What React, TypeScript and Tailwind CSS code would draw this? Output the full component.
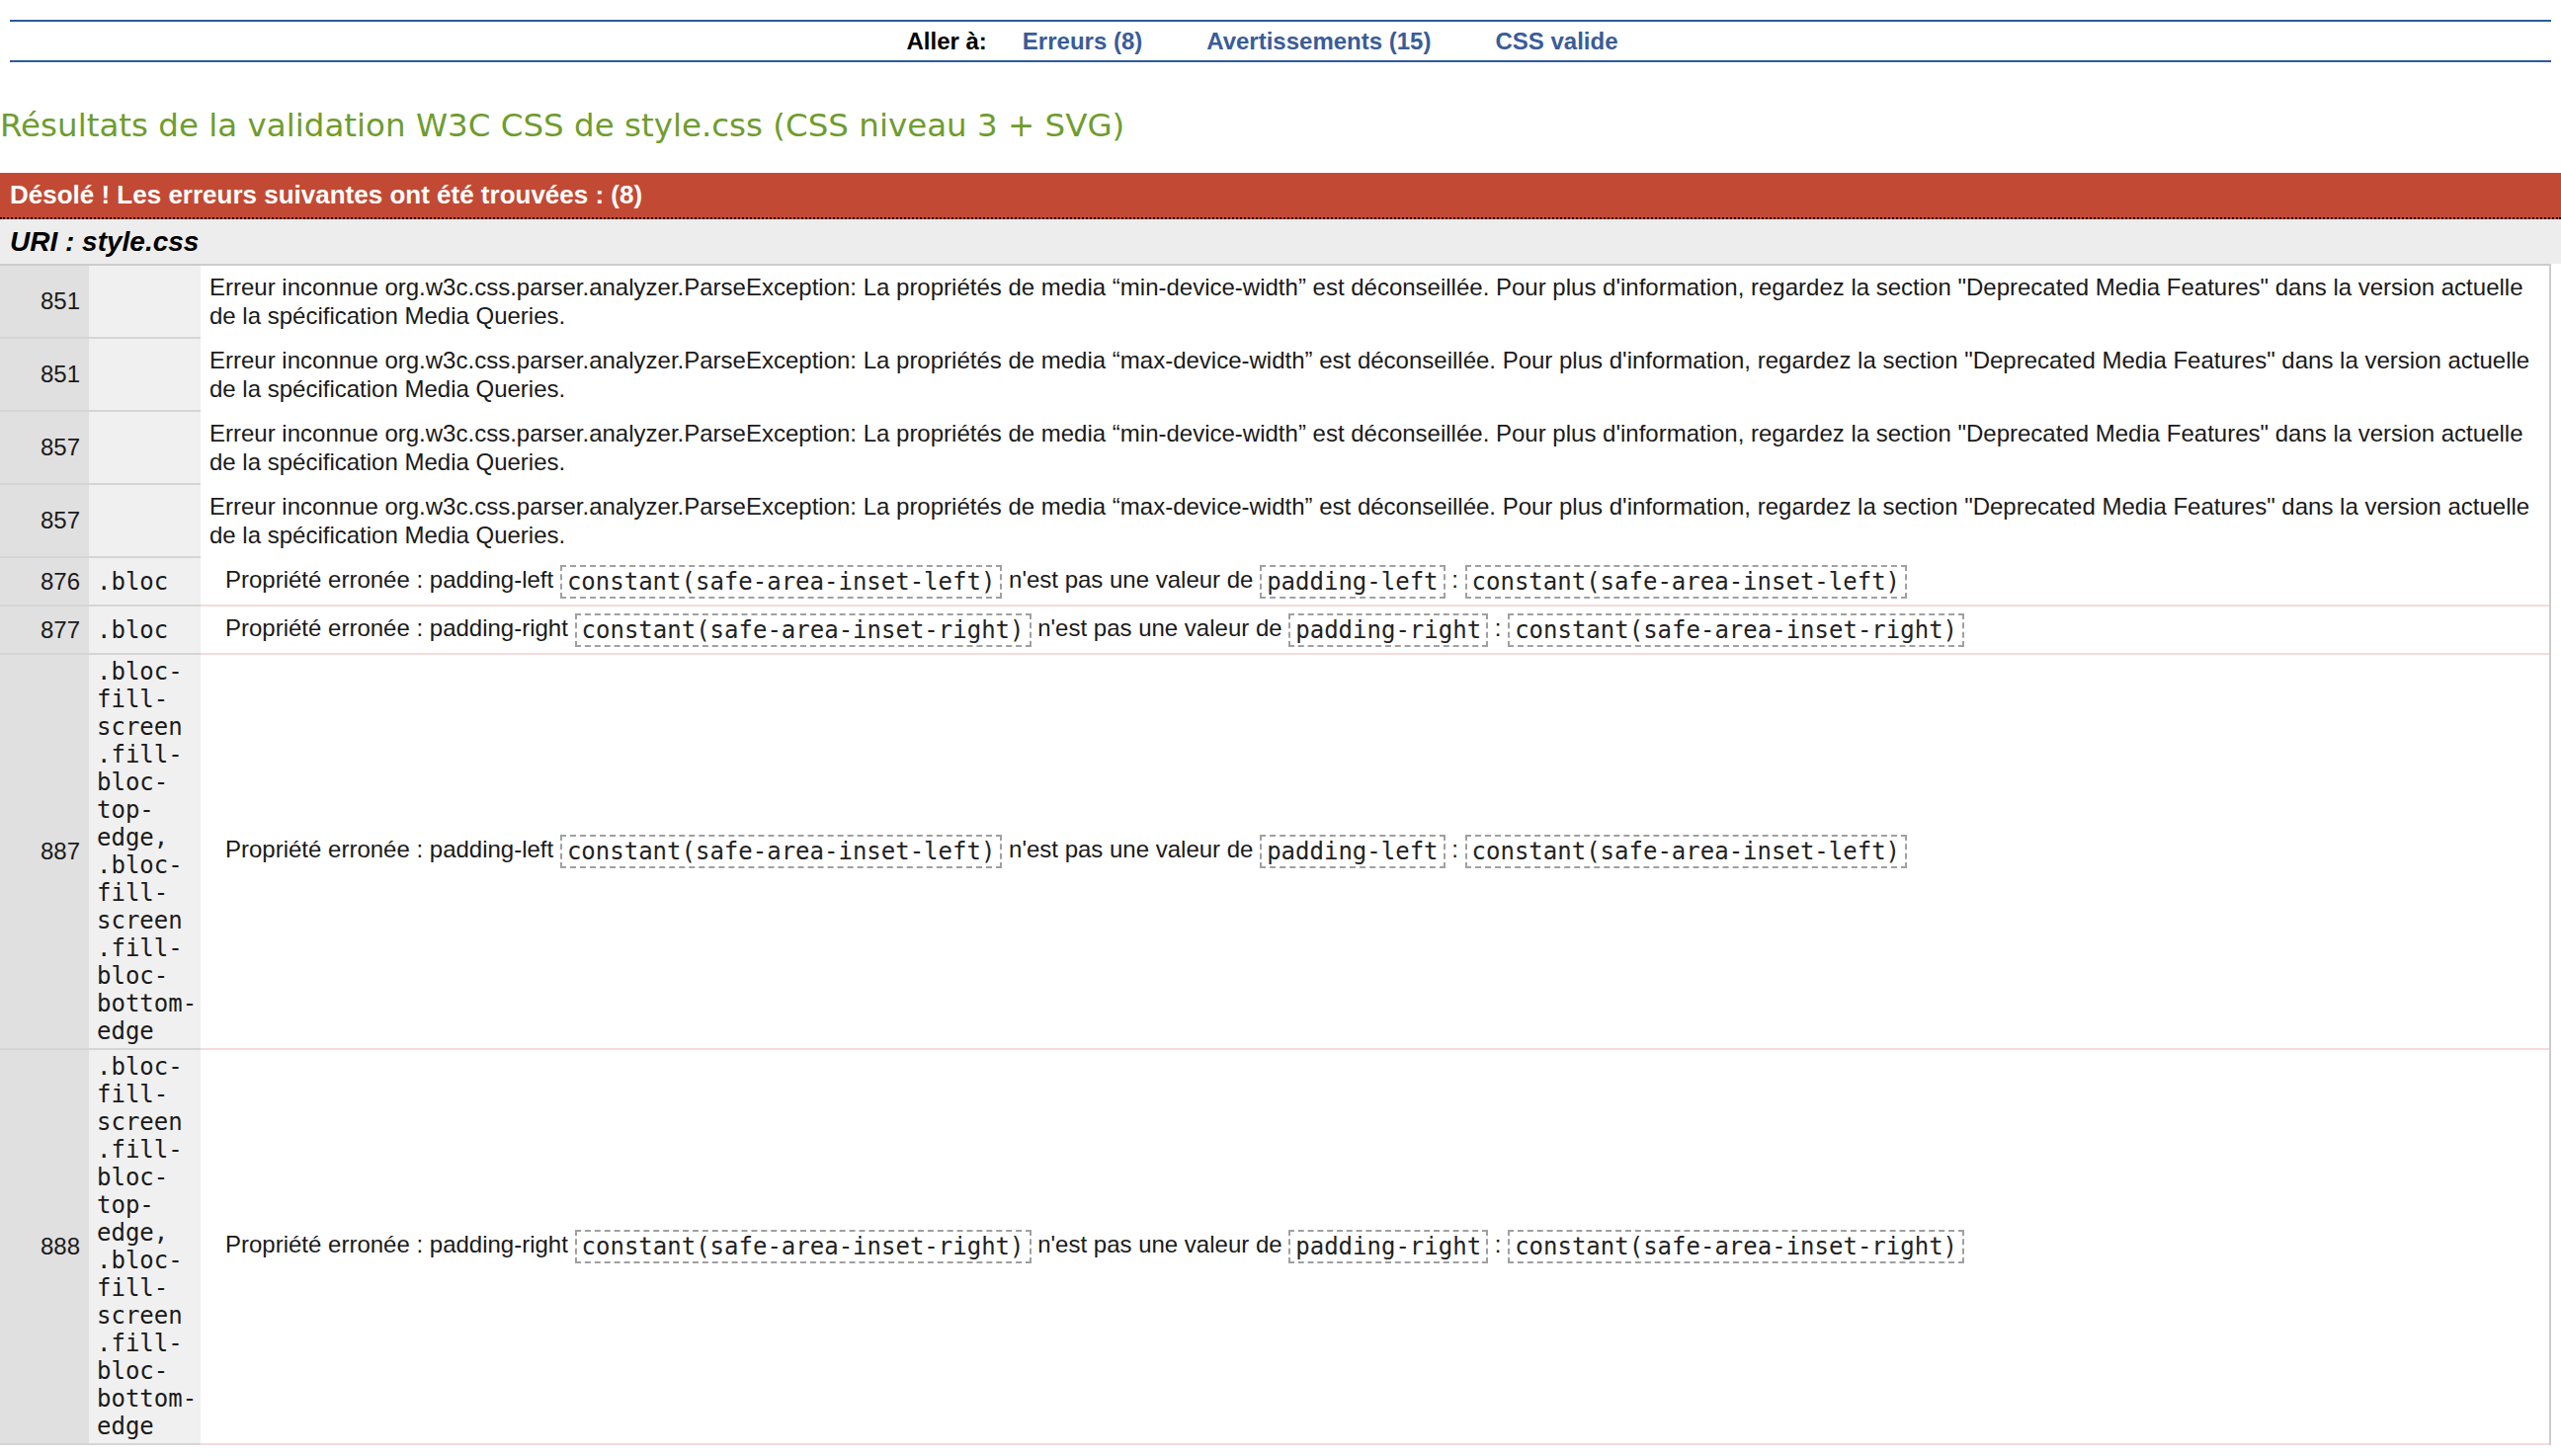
import React from 'react'

const MONO = "font-['DejaVu_Sans_Mono','Liberation_Mono',monospace]"

type Row =
  | { line: string; kind: 'media'; feature: string }
  | { line: string; kind: 'prop'; selector: string; prop: string; value: string }

const ROWS: Row[] = [
  { line: '851', kind: 'media', feature: 'min-device-width' },
  { line: '851', kind: 'media', feature: 'max-device-width' },
  { line: '857', kind: 'media', feature: 'min-device-width' },
  { line: '857', kind: 'media', feature: 'max-device-width' },
  { line: '876', kind: 'prop', selector: '.bloc', prop: 'padding-left', value: 'constant(safe-area-inset-left)' },
  { line: '877', kind: 'prop', selector: '.bloc', prop: 'padding-right', value: 'constant(safe-area-inset-right)' },
  {
    line: '887', kind: 'prop',
    selector: '.bloc-fill-screen .fill-bloc-top-edge, .bloc-fill-screen .fill-bloc-bottom-edge',
    prop: 'padding-left', value: 'constant(safe-area-inset-left)',
  },
  {
    line: '888', kind: 'prop',
    selector: '.bloc-fill-screen .fill-bloc-top-edge, .bloc-fill-screen .fill-bloc-bottom-edge',
    prop: 'padding-right', value: 'constant(safe-area-inset-right)',
  },
]

function Code({ children }: { children: React.ReactNode }) {
  return (
    <span className={`inline-block align-middle border-2 border-dashed border-[#a0a0a0] px-[5px] py-[1px] leading-[28px] text-[#222] ${MONO}`}>
      {children}
    </span>
  )
}

function ErrorRow({ row }: { row: Row }) {
  const prop = row.kind === 'prop'
  return (
    <>
      <div className="flex items-center justify-end pr-[9px] bg-[#e0e0e0] border-b-2 border-[#d5d5d5]">
        {row.line}
      </div>
      <div className={`flex items-center pl-[8px] pr-[2px] py-[3px] bg-[#f0f0f0] border-b-2 border-[#d5d5d5] leading-[28px] ${MONO}`}>
        {prop ? <span>{row.selector}</span> : null}
      </div>
      {prop ? (
        <div className="flex items-center min-h-[49px] pl-[25px] pr-[9px] border-b-2 border-[#f7dada]">
          <p className="leading-[28px]">
            Propriété erronée : {row.prop} <Code>{row.value}</Code> n'est pas une valeur de <Code>{row.prop}</Code> : <Code>{row.value}</Code>
          </p>
        </div>
      ) : (
        <div className="flex items-center pl-[9px] pr-[9px] py-[7px] border-b-2 border-white">
          <p className="leading-[29px]">
            Erreur inconnue org.w3c.css.parser.analyzer.ParseException: La propriétés de media “{row.feature}” est déconseillée. Pour plus d'information, regardez la section "Deprecated Media Features" dans la version actuelle
            <br />
            de la spécification Media Queries.
          </p>
        </div>
      )}
    </>
  )
}

export default function App() {
  return (
    <div className="min-h-screen bg-white text-[24px] text-[#1a1a1a] font-['Liberation_Sans',Arial,sans-serif]">
      {/* Aller à */}
      <nav className="mx-[10px] mt-[20px] h-[43px] border-y-2 border-[#2b5d9b] flex items-center justify-center font-bold">
        <div className="flex items-center pr-[37px]">
          <span className="text-black">Aller à:</span>
          <a href="#errors" className="ml-[36px] text-[#3a5c98]">Erreurs (8)</a>
          <a href="#warnings" className="ml-[65px] text-[#3a5c98]">Avertissements (15)</a>
          <a href="#css" className="ml-[65px] text-[#3a5c98]">CSS valide</a>
        </div>
      </nav>

      <h2 className="mt-[45px] text-[32.5px] leading-[38px] text-[#6f9c2d] font-['DejaVu_Sans',Verdana,sans-serif]">
        Résultats de la validation W3C CSS de style.css (CSS niveau 3 + SVG)
      </h2>

      {/* Erreurs */}
      <div id="errors" className="mt-[29px]">
        <h3 className="h-[47px] flex items-center px-[10px] bg-[#c24a34] text-white text-[26px] font-bold border-b-2 border-dotted border-black">
          Désolé ! Les erreurs suivantes ont été trouvées : (8)
        </h3>
        <h4 className="h-[45px] flex items-center px-[10px] bg-[#ededed] italic font-bold text-[28px] text-black">
          URI : style.css
        </h4>
        <div className="mr-[10px] border-t-2 border-r-2 border-[#cccccc] grid grid-cols-[90px_113px_1fr]">
          {ROWS.map((r, i) => <ErrorRow key={i} row={r} />)}
        </div>
      </div>
    </div>
  )
}
